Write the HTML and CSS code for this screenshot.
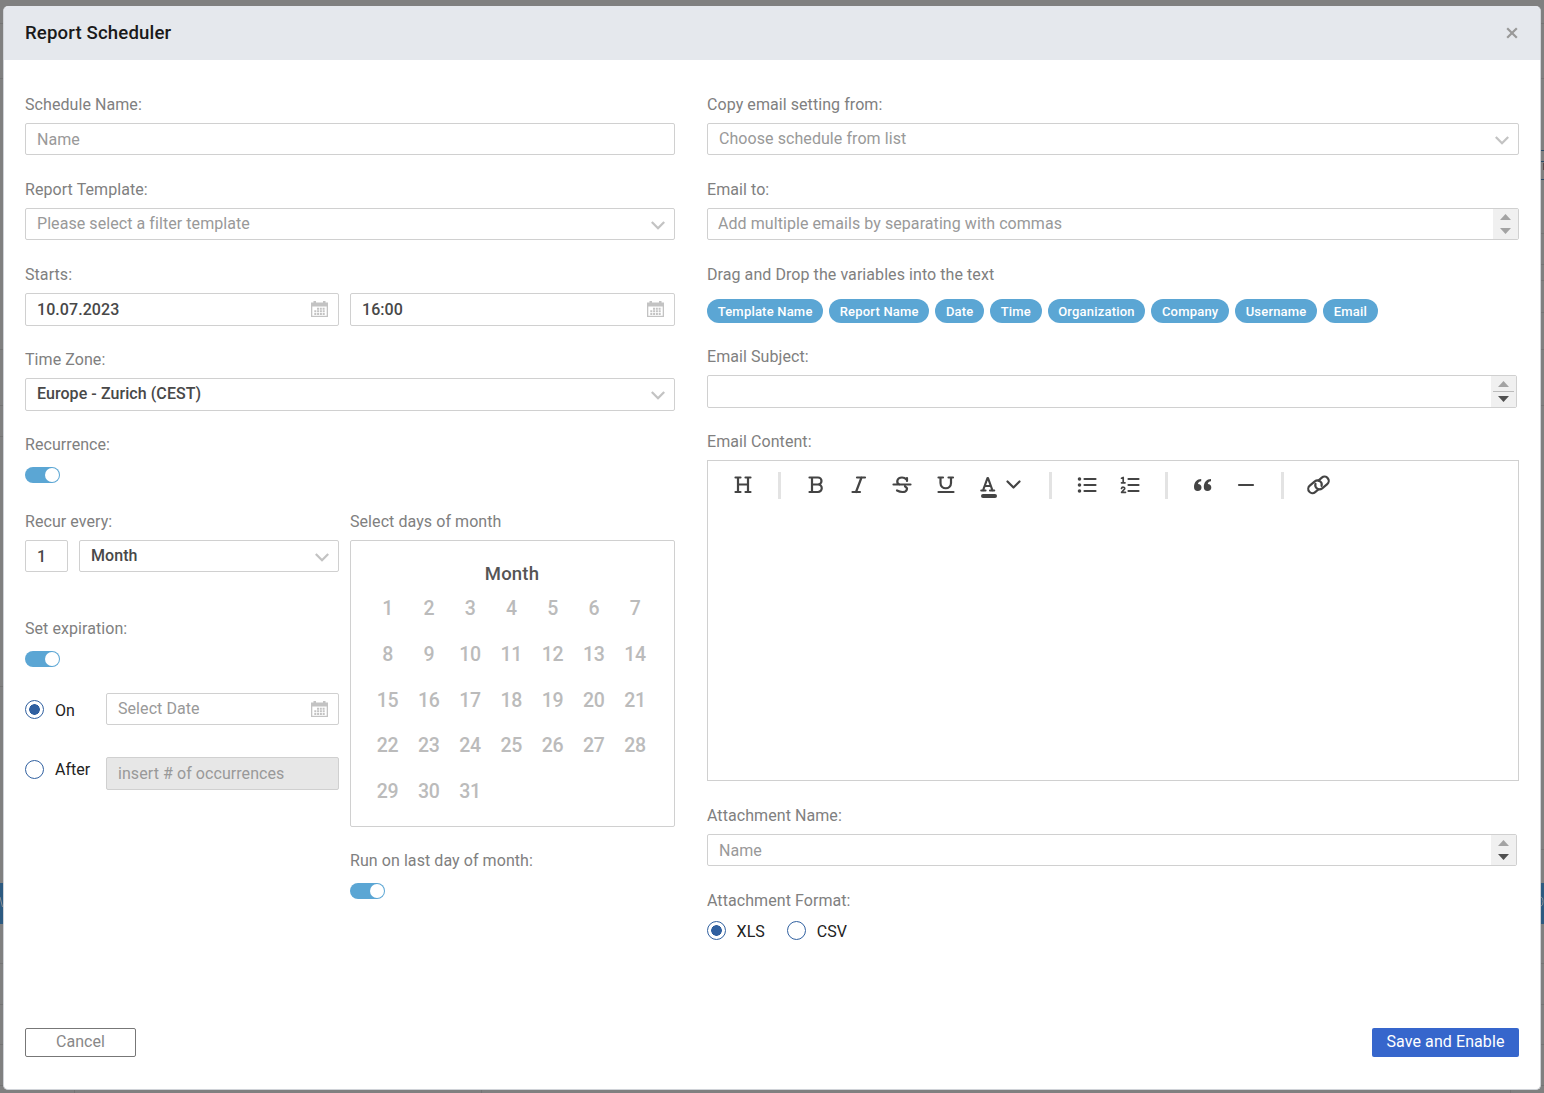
FILE: index.html
```html
<!DOCTYPE html>
<html lang="en">

<head>
    <meta charset="UTF-8">
    <title>Report Scheduler</title>
    <link rel="stylesheet" href="styles.css">
</head>

<body>
    <!-- page behind the modal -->
    <svg class="backdrop" width="1544" height="1093" aria-hidden="true">
        <path d="M0 23.5H1544M0 78.5H1544M0 349.5H3M0 405.5H3M0 436.5H3M0 686.5H3M0 963.5H3M0 1004.5H3M0 1044.5H3M0 1085.5H3M1541 233.5H1544M1541 264.5H1544M1541 280.5H1544M1541 312.5H1544M1541 349.5H1544M1541 405.5H1544M1541 849.5H1544M1541 963.5H1544M1541 1004.5H1544M1541 1044.5H1544M1541 1085.5H1544M74.5 1090V1093M481.5 1090V1093M1510.5 1086V1093" stroke="#747474" />
        <path d="M1541 150.5H1544M1541 161.5H1544M1541 179.5H1544" stroke="#2a4a66" />
        <path d="M1543.5 163V170" stroke="#5a4a4a" />
        <path d="M0 883H3V924H0zM1541 883H1544V924H1541z" fill="#2c5a80" />
        <path d="M0 897l2.5 10M1541 897q2 0 2 4.500t-2 4.500" fill="none" stroke="#8a8f94" />
    </svg>

    <svg class="defs" width="0" height="0">
        <symbol id="chevron" viewBox="0 0 14 9">
            <path d="M.8 1L7 7.200 13.200 1" fill="none" stroke="#c3c3c3" stroke-width="2.300" />
        </symbol>
        <symbol id="calendar" viewBox="0 0 17 16">
            <path d="M0 1.500H2.500V0H5V1.500H12V0H14.500V1.500H17V16H0z" fill="#c3c3c3" />
            <path d="M1.300 5.500H15.700V14.800H1.300z" fill="#fff" />
            <path d="M6 7.700H14.500M3.300 10.300H14.500M3.300 12.900H14.500" stroke="#c3c3c3" stroke-width="2" stroke-dasharray="2 .8" fill="none" />
        </symbol>
    </svg>

    <div class="modal">
        <div class="modal-header">
            <h1>Report Scheduler</h1>
            <svg class="close" width="12" height="12" viewBox="0 0 12 12">
                <path d="M1.200 1.200L10.800 10.800M10.800 1.200L1.200 10.800" stroke="#999" stroke-width="2.200" />
            </svg>
        </div>

        <div class="modal-body">
            <div class="left">
                <div class="field">
                    <label>Schedule Name:</label>
                    <div class="input placeholder low">Name</div>
                </div>
                <div class="field">
                    <label>Report Template:</label>
                    <div class="input placeholder select">Please select a filter template<svg class="chevron"><use href="#chevron" /></svg></div>
                </div>
                <div class="field tall">
                    <label>Starts:</label>
                    <div class="row">
                        <div class="input date-from">10.07.2023<svg class="calendar"><use href="#calendar" /></svg></div>
                        <div class="input grow">16:00<svg class="calendar"><use href="#calendar" /></svg></div>
                    </div>
                </div>
                <div class="field tall">
                    <label>Time Zone:</label>
                    <div class="input select">Europe - Zurich (CEST)<svg class="chevron"><use href="#chevron" /></svg></div>
                </div>
                <div class="field recurrence">
                    <label>Recurrence:</label>
                    <div class="toggle"></div>
                </div>

                <div class="row">
                    <div class="recur">
                        <div class="field">
                            <label>Recur every:</label>
                            <div class="row">
                                <div class="input count low">1</div>
                                <div class="input grow select">Month<svg class="chevron"><use href="#chevron" /></svg></div>
                            </div>
                        </div>
                        <div class="field expiration">
                            <label>Set expiration:</label>
                            <div class="toggle"></div>
                        </div>
                        <div class="expire-row">
                            <span class="radio checked"></span>
                            <span class="radio-text on">On</span>
                            <div class="input placeholder select">Select Date<svg class="calendar"><use href="#calendar" /></svg></div>
                        </div>
                        <div class="expire-row after">
                            <span class="radio"></span>
                            <span class="radio-text">After</span>
                            <div class="input placeholder disabled">insert # of occurrences</div>
                        </div>
                    </div>

                    <div class="days grow">
                        <label>Select days of month</label>
                        <div class="month">
                            <div class="month-title">Month</div>
                            <div class="month-grid">
                                <span>1</span><span>2</span><span>3</span><span>4</span><span>5</span><span>6</span><span>7</span>
                                <span>8</span><span>9</span><span>10</span><span>11</span><span>12</span><span>13</span><span>14</span>
                                <span>15</span><span>16</span><span>17</span><span>18</span><span>19</span><span>20</span><span>21</span>
                                <span>22</span><span>23</span><span>24</span><span>25</span><span>26</span><span>27</span><span>28</span>
                                <span>29</span><span>30</span><span>31</span>
                            </div>
                        </div>
                        <label>Run on last day of month:</label>
                        <div class="toggle"></div>
                    </div>
                </div>
            </div>

            <div class="right">
                <div class="field">
                    <label>Copy email setting from:</label>
                    <div class="input placeholder select">Choose schedule from list<svg class="chevron"><use href="#chevron" /></svg></div>
                </div>
                <div class="field">
                    <label>Email to:</label>
                    <div class="input placeholder select area email-to">Add multiple emails by separating with commas
                        <div class="scroll"><i class="up"></i><i class="down off"></i></div>
                    </div>
                </div>
                <div class="field variables">
                    <label>Drag and Drop the variables into the text</label>
                    <div class="pills">
                        <span>Template Name</span>
                        <span>Report Name</span>
                        <span>Date</span>
                        <span>Time</span>
                        <span>Organization</span>
                        <span>Company</span>
                        <span>Username</span>
                        <span>Email</span>
                    </div>
                </div>
                <div class="field tall">
                    <label>Email Subject:</label>
                    <div class="input area narrow">
                        <div class="scroll split"><i class="up"></i><i class="down"></i></div>
                    </div>
                </div>
                <div class="field content">
                    <label>Email Content:</label>
                    <div class="editor">
                        <div class="toolbar">
                            <svg width="24" height="24"><path d="M4.500 4.500H9.500M14.500 4.500H19.500M4.500 19H9.500M14.500 19H19.500M7 4.500V19M17 4.500V19M7 11.500H17" /></svg>
                            <b class="bar"></b>
                            <svg width="24" height="24"><path d="M5.500 4.500H14a3.500 3.500 0 0 1 0 7H8M14 11.500a3.700 3.700 0 0 1 0 7.500H5.500M8 4.500V19" /></svg>
                            <svg width="24" height="24"><path d="M10 4.500H18M5.500 19H13M14.500 4.500L9 19" /></svg>
                            <svg width="24" height="24"><path d="M3.500 11.500H20.500M17 5V8M16.500 6.500C15 4.800 13.500 4.500 12 4.500 6.500 4.500 6 10 9.500 11.500M15 13.500C18.500 15 17 19 12.500 19 10 19 8.500 18.300 7 17.500" /></svg>
                            <svg width="24" height="24"><path d="M4.500 4.500H9M14.500 4.500H19M6.500 4.500V10C6.500 17 17 17 17 10V4.500M4.500 19H19.500" /></svg>
                            <svg width="49" height="24"><path d="M4.300 17.500H8.500M13 17.500H17.200M6 17.500L10.500 5H11L15.500 17.500M7.800 13H13.700M30.500 8.500L36.500 14.500 42.500 8.500" /><path d="M6 23H18" stroke-width="4" /></svg>
                            <b class="bar"></b>
                            <svg width="24" height="24"><path d="M9.500 6H20.500M9.500 12H20.500M9.500 18H20.500" /><path d="M4.500 6h.01M4.500 12h.01M4.500 18h.01" stroke-width="3.600" /></svg>
                            <svg width="24" height="24"><path d="M10.500 6H20.500M10.500 12H20.500M10.500 18H20.500" /><path d="M3.500 5.200L5.200 4.500V9.500M3.500 9.800H7M3.500 15.500C4 13.500 7.300 14 6.600 16L3.600 19.300H7.500" stroke-width="1.700" /></svg>
                            <b class="bar"></b>
                            <svg width="24" height="24"><path class="solid" d="M10.200 6C6 6 3 9 3 14c0 2.800 1.300 4 3.700 4s3.800-1.300 3.800-3.500-1.400-3.500-3.500-3.500C7 9.500 8.500 8.500 10.200 8.300zM20 6c-4.200 0-7.200 3-7.200 8 0 2.800 1.300 4 3.700 4s3.800-1.300 3.800-3.500-1.400-3.500-3.500-3.500C16.800 9.500 18.300 8.500 20 8.300z" /></svg>
                            <svg width="24" height="24"><path d="M5 12H19" /></svg>
                            <b class="bar"></b>
                            <svg width="24" height="24"><path transform="translate(8 13.800) rotate(-40)" d="M1.200 4.200H-3.300a4.200 4.200 0 0 1 0-8.400H3.300A4.200 4.200 0 0 1 5.600 3.500" /><path transform="translate(15 10) rotate(-40)" d="M-1.200-4.200H3.300a4.200 4.200 0 0 1 0 8.400H-3.300A4.200 4.200 0 0 1-5.600-3.500" /></svg>
                        </div>
                    </div>
                </div>
                <div class="field">
                    <label>Attachment Name:</label>
                    <div class="input placeholder low area narrow">Name
                        <div class="scroll"><i class="up"></i><i class="down"></i></div>
                    </div>
                </div>
                <label>Attachment Format:</label>
                <div class="formats">
                    <span class="radio checked"></span>
                    <span class="radio-text">XLS</span>
                    <span class="radio"></span>
                    <span class="radio-text">CSV</span>
                </div>
            </div>
        </div>

        <div class="modal-footer">
            <button class="cancel">Cancel</button>
            <button class="save">Save and Enable</button>
        </div>
    </div>
</body>

</html>
```
FILE: styles.css
```css
* {
    margin: 0;
    padding: 0;
    box-sizing: border-box;
}

body {
    font-family: Roboto, sans-serif;
    font-size: 16px;
    letter-spacing: 0.07px;
    background-color: #808080;
    color: #444;
    height: 1093px;
    padding: 6px 3px 3px;
    overflow: hidden;
}

.backdrop,
.defs {
    position: absolute;
    left: 0;
    top: 0;
}

.modal {
    position: relative;
    height: 1084px;
    background: #fff;
    border: 1px solid #d0d3d8;
    border-top-color: #e5e8ed;
    border-radius: 5px;
    display: flex;
    flex-direction: column;
}

.modal-header {
    height: 53px;
    flex: none;
    background: #e5e8ed;
    border-radius: 4px 4px 0 0;
    padding: 0 22px 2px 21px;
    display: flex;
    align-items: center;
    justify-content: space-between;
}

h1 {
    font-size: 18.6px;
    font-weight: 500;
    color: #1a1a1a;
    letter-spacing: 0.15px;
}

.close {
    margin-top: 1px;
}

.modal-body {
    flex: 1;
    padding: 34px 21px 0;
    display: flex;
    gap: 32px;
}

.left {
    width: 650px;
}

.right {
    width: 812px;
}

label {
    display: block;
    height: 20px;
    line-height: 22px;
    margin-bottom: 9px;
    color: #808080;
}

.field {
    margin-bottom: 24px;
}

.field.tall {
    margin-bottom: 23px;
}

.row {
    display: flex;
    gap: 11px;
}

.grow {
    flex: 1;
}

.input {
    height: 32px;
    border: 1px solid #d0d0d0;
    border-radius: 2px;
    padding: 0 11px;
    display: flex;
    align-items: center;
    justify-content: space-between;
    font-weight: 500;
    color: #484848;
    background: #fff;
    white-space: nowrap;
}

.tall .input {
    height: 33px;
}

.input.select {
    padding-bottom: 1px;
}

.tall .select {
    padding-bottom: 2px;
}

.input.low {
    padding-top: 1px;
}

.input.placeholder {
    font-weight: 400;
    color: #999;
}

.input.disabled {
    height: 33px;
    background: #e7e7e7;
}

.date-from {
    width: 314px;
}

.count {
    width: 43px;
}

.chevron {
    width: 14px;
    height: 9px;
    margin: 3px -2px 0 0;
}

.calendar {
    width: 17px;
    height: 16px;
    margin-right: -1.4px;
}

.tall .calendar {
    margin-bottom: 1px;
}

.select .calendar {
    margin-top: 1px;
}

/* toggles and radios */
.toggle {
    width: 35px;
    height: 16px;
    margin-top: 13px;
    border-radius: 8px;
    background: #5ba6d4;
    padding: 1px;
    display: flex;
    justify-content: flex-end;
}

.toggle::after {
    content: "";
    width: 14px;
    height: 14px;
    border-radius: 50%;
    background: #fff;
}

.recurrence {
    margin-bottom: 28px;
}

.radio {
    flex: none;
    width: 19px;
    height: 19px;
    border: 1px solid #3060a0;
    border-radius: 50%;
}

.radio.checked {
    background: radial-gradient(circle, #3060a0 5px, #fff 5.6px);
}

.radio-text {
    color: #222;
    line-height: 20px;
    letter-spacing: 0;
}

/* recurrence */
.recur {
    width: 314px;
}

.recur .field:first-child {
    margin-bottom: 46px;
}

.expiration {
    margin-bottom: 26px;
}

.expire-row {
    display: flex;
    align-items: center;
}

.expire-row .radio {
    margin-top: 1px;
}

.expire-row .radio-text {
    width: 51px;
    margin-left: 11px;
}

.expire-row .on {
    margin-top: 3px;
}

.expire-row .input {
    flex: 1;
}

.expire-row.after {
    margin-top: 32px;
}

.after .radio,
.after .radio-text {
    margin-top: -8px;
}

.month {
    height: 287px;
    border: 1px solid #d0d0d0;
    border-radius: 2px;
    padding: 21px 17px 0 16px;
    margin-bottom: 23px;
}

.month-title {
    font-size: 18.5px;
    font-weight: 500;
    letter-spacing: 0.2px;
    line-height: 24px;
    text-align: center;
    color: #555;
}

.month-grid {
    display: grid;
    grid-template-columns: repeat(7, 41.25px);
    grid-auto-rows: 45.8px;
    font-size: 19.5px;
    font-weight: 500;
    letter-spacing: -0.1px;
    line-height: 45px;
    text-align: center;
    color: #bbb;
}

/* email side */
.area {
    position: relative;
}

.email-to {
    padding-left: 10px;
}

.narrow {
    width: 810px;
}

.scroll {
    position: absolute;
    top: 0;
    right: 0;
    bottom: 0;
    width: 25px;
    background: #f0f0f0;
    display: flex;
    flex-direction: column;
    align-items: center;
    justify-content: center;
    gap: 8px;
}

.scroll.split {
    background: linear-gradient(#bbb, #bbb) 2px 15px / 21px 1px no-repeat #f0f0f0;
    gap: 9px;
}

.scroll i {
    width: 11px;
    height: 6px;
}

.scroll .up {
    background: #a3a3a3;
    clip-path: polygon(50% 0, 100% 100%, 0 100%);
}

.scroll .down {
    background: #505050;
    clip-path: polygon(0 0, 100% 0, 50% 100%);
}

.scroll .off {
    background: #a3a3a3;
}

.variables {
    margin-bottom: 23px;
}

.variables label {
    margin-bottom: 15px;
}

.pills {
    display: flex;
    gap: 5.8px;
}

.pills span {
    height: 24px;
    line-height: 25px;
    padding: 0 10.7px;
    border-radius: 12px;
    background: #5ba6d4;
    color: #fff;
    font-size: 13px;
    font-weight: 500;
    letter-spacing: 0.2px;
}

.editor {
    height: 321px;
    border: 1px solid #d0d0d0;
}

.toolbar {
    display: flex;
    align-items: center;
    height: 48px;
    padding-left: 23px;
}

.toolbar svg {
    overflow: visible;
    fill: none;
    stroke: #444;
    stroke-width: 2.2;
    stroke-linecap: round;
    stroke-linejoin: round;
}

.toolbar svg + svg {
    margin-left: 19.2px;
}

.toolbar .solid {
    fill: #444;
    stroke: none;
}

.bar {
    width: 3px;
    height: 27px;
    margin: 0 23px;
    background: #e3e3e3;
}

.formats {
    display: flex;
    align-items: center;
    margin-top: 11px;
}

.formats .radio {
    margin-top: -1px;
}

.formats .radio-text {
    margin: 1px 22.4px 0 10.6px;
}

.formats .radio {
    margin-top: -2px;
}

/* footer */
.modal-footer {
    flex: none;
    padding: 0 21px 32px;
    display: flex;
    justify-content: space-between;
}

button {
    height: 29px;
    border-radius: 2px;
    font-family: inherit;
    font-size: 16px;
    letter-spacing: 0.08px;
    padding-bottom: 2px;
}

.cancel {
    width: 111px;
    background: #fff;
    border: 1px solid #777;
    color: #888;
}

.save {
    width: 147px;
    background: #3666cc;
    border: none;
    color: #fff;
}
```
